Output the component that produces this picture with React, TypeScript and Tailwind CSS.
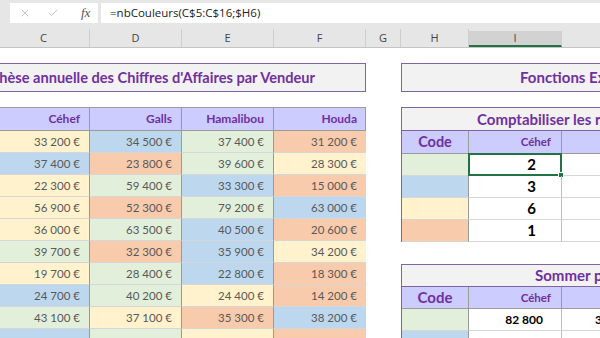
import React from 'react';
import { X, Check } from 'lucide-react';

const fills: Record<string, string> = {
  c: 'bg-[#fff2cc]',
  b: 'bg-[#bdd7ee]',
  g: 'bg-[#e2efda]',
  o: 'bg-[#f8cbad]',
};

const sales: [string, string][][] = [
  [['33 200 €', 'c'], ['34 500 €', 'b'], ['37 400 €', 'g'], ['31 200 €', 'o']],
  [['37 400 €', 'b'], ['23 800 €', 'o'], ['39 600 €', 'g'], ['28 300 €', 'c']],
  [['22 300 €', 'c'], ['59 400 €', 'g'], ['33 300 €', 'b'], ['15 000 €', 'o']],
  [['56 900 €', 'c'], ['52 300 €', 'o'], ['79 200 €', 'g'], ['63 000 €', 'b']],
  [['36 000 €', 'c'], ['63 500 €', 'g'], ['40 500 €', 'b'], ['20 600 €', 'o']],
  [['39 700 €', 'g'], ['32 300 €', 'o'], ['35 900 €', 'b'], ['34 200 €', 'c']],
  [['19 700 €', 'c'], ['28 400 €', 'g'], ['22 800 €', 'b'], ['18 300 €', 'o']],
  [['24 700 €', 'b'], ['40 200 €', 'g'], ['24 400 €', 'c'], ['14 200 €', 'o']],
  [['43 100 €', 'g'], ['37 100 €', 'c'], ['35 300 €', 'o'], ['38 200 €', 'b']],
  [['', 'b'], ['', 'g'], ['', 'c'], ['', 'o']],
];

const vendors = ['Céhef', 'Galls', 'Hamalibou', 'Houda'];

const columns = [
  { l: 'C', w: 'w-[92px] -ml-[2px]' },
  { l: 'D', w: 'w-[92px]' },
  { l: 'E', w: 'w-[92px]' },
  { l: 'F', w: 'w-[92px]' },
  { l: 'G', w: 'w-[35px]' },
  { l: 'H', w: 'w-[68px]' },
  { l: 'I', w: 'w-[93px]', active: true },
  { l: 'J', w: 'w-[93px]' },
];

const counts: [string, string][] = [
  ['g', '2'],
  ['b', '3'],
  ['c', '6'],
  ['o', '1'],
];

export default function App() {
  return (
    <div className="w-[600px] h-[338px] overflow-hidden bg-white font-['Lato',sans-serif]">
      {/* formula bar */}
      <div className="h-[29px] bg-[#e6e6e6] flex items-start pt-[3px]">
        <div className="ml-[10px] w-[88px] h-[20px] bg-white flex items-center text-[#a6a6a6]">
          <X size={12} strokeWidth={1.3} className="ml-[9px]" />
          <Check size={12} strokeWidth={1.3} className="ml-[16px]" />
          <span className="ml-[22px] font-['Liberation_Serif',serif] italic text-[13px] text-[#555]">fx</span>
        </div>
        <div className="ml-[3px] flex-1 h-[20px] bg-white flex items-center pl-[9px] font-['Open_Sans',sans-serif] text-[11.5px] text-[#222]">
          =nbCouleurs(C$5:C$16;$H6)
        </div>
      </div>

      {/* column headers */}
      <div className="h-[19px] flex bg-[#e6e6e6] border-b border-[#c4c4c4] font-['Open_Sans',sans-serif] text-[11px] text-[#444]">
        {columns.map((c) => (
          <div
            key={c.l}
            className={`${c.w} shrink-0 flex items-center justify-center border-r border-[#cfcfcf] ${
              c.active ? 'bg-[#d2d2d2] border-b-2 border-b-[#217346] mt-[2px]' : ''
            }`}
          >
            {c.l}
          </div>
        ))}
      </div>

      {/* sheet */}
      <div className="flex pt-[15px]">
        {/* left: synthèse */}
        <div className="w-[368px] -ml-[2px] shrink-0">
          <div className="h-[29px] border border-[#8064a2] bg-[#f2f2f2] flex items-center justify-end pr-[50px] overflow-hidden">
            <span className="whitespace-nowrap text-[#7030a0] font-bold text-[14.6px]">
              Synthèse annuelle des Chiffres d&apos;Affaires par Vendeur
            </span>
          </div>
          <div className="mt-[15px] border-t border-r border-[#9a9a9a]">
            <div className="h-[23px] flex bg-[#ccccff] border-b border-[#9a9a9a]">
              {vendors.map((v) => (
                <div
                  key={v}
                  className="w-[92px] shrink-0 flex items-center justify-end pr-[9px] border-r border-[#9a9a9a] last:border-r-0 text-[#7030a0] font-bold text-[12px]"
                >
                  {v}
                </div>
              ))}
            </div>
            {sales.map((row, i) => (
              <div key={i} className="h-[22px] flex">
                {row.map(([val, f], j) => (
                  <div
                    key={j}
                    className={`w-[92px] shrink-0 flex items-center justify-end pr-[9px] border-b border-b-[#d6d6d6] border-r border-r-[#9a9a9a] last:border-r-0 text-[#595959] text-[11.5px] ${fills[f]}`}
                  >
                    {val}
                  </div>
                ))}
              </div>
            ))}
          </div>
        </div>

        {/* G column */}
        <div className="w-[35px] shrink-0" />

        {/* right: fonctions */}
        <div className="w-[254px] shrink-0">
          <div className="h-[29px] border border-[#8064a2] bg-[#f2f2f2] flex items-center pl-[118px]">
            <span className="whitespace-nowrap text-[#7030a0] font-bold text-[15px]">
              Fonctions Excel par couleur
            </span>
          </div>

          <div className="mt-[15px] border-l border-t border-[#8064a2]">
            <div className="h-[23px] bg-[#f2f2f2] border-b border-[#8064a2] flex items-center pl-[75px]">
              <span className="whitespace-nowrap text-[#7030a0] font-bold text-[15px]">
                Comptabiliser les résultats par couleur
              </span>
            </div>
            <div className="h-[23px] flex bg-[#ccccff] border-b border-[#9a9a9a]">
              <div className="w-[67px] shrink-0 flex items-center justify-center border-r border-[#9a9a9a] text-[#7030a0] font-bold text-[14.5px]">
                Code
              </div>
              <div className="w-[93px] shrink-0 flex items-center justify-end pr-[10px] border-r border-[#9a9a9a] text-[#7030a0] font-bold text-[11.5px]">
                Céhef
              </div>
              <div className="w-[93px] shrink-0 flex items-center justify-end pr-[10px] text-[#7030a0] font-bold text-[11.5px]">
                Galls
              </div>
            </div>
            {counts.map(([f, n], i) => (
              <div key={i} className="h-[22px] flex">
                <div className={`w-[67px] shrink-0 border-r border-[#9a9a9a] border-b border-b-[#d6d6d6] ${fills[f]}`} />
                <div className="relative w-[93px] shrink-0 flex items-center justify-end pr-[25px] border-r border-[#bdbdbd] border-b border-b-[#d6d6d6] text-black font-bold text-[15px]">
                  {n}
                  {i === 0 && (
                    <div className="absolute -left-[1px] -top-[1px] w-[94px] h-[23px] border-2 border-[#217346]">
                      <div className="absolute -right-[4px] -bottom-[4px] w-[6px] h-[6px] bg-[#217346] border border-white" />
                    </div>
                  )}
                </div>
                <div className="w-[93px] shrink-0 border-b border-[#d6d6d6]" />
              </div>
            ))}
          </div>

          <div className="mt-[22px] border-l border-t border-[#8064a2]">
            <div className="h-[22px] bg-[#f2f2f2] border-b border-[#8064a2] flex items-center pl-[133px]">
              <span className="whitespace-nowrap text-[#7030a0] font-bold text-[15px]">
                Sommer par couleur
              </span>
            </div>
            <div className="h-[22px] flex bg-[#ccccff] border-b border-[#9a9a9a]">
              <div className="w-[67px] shrink-0 flex items-center justify-center border-r border-[#9a9a9a] text-[#7030a0] font-bold text-[15px]">
                Code
              </div>
              <div className="w-[93px] shrink-0 flex items-center justify-end pr-[10px] border-r border-[#9a9a9a] text-[#7030a0] font-bold text-[11.5px]">
                Céhef
              </div>
              <div className="w-[93px] shrink-0 flex items-center justify-end pr-[10px] text-[#7030a0] font-bold text-[11.5px]">
                Galls
              </div>
            </div>
            {[
              ['g', '82 800', '312 800'],
              ['b', '92 900', '104 600'],
            ].map(([f, a, b], i) => (
              <div key={i} className="h-[22px] flex">
                <div className={`w-[67px] shrink-0 border-r border-[#9a9a9a] border-b border-b-[#d6d6d6] ${fills[f]}`} />
                <div className="w-[93px] shrink-0 flex items-center justify-end pr-[18px] border-r border-[#bdbdbd] border-b border-b-[#d6d6d6] text-black font-bold text-[12px]">
                  {a}
                </div>
                <div className="w-[93px] shrink-0 flex items-center pl-[33px] border-b border-[#d6d6d6] text-black font-bold text-[12px]">
                  {b}
                </div>
              </div>
            ))}
          </div>
        </div>
      </div>
    </div>
  );
}
